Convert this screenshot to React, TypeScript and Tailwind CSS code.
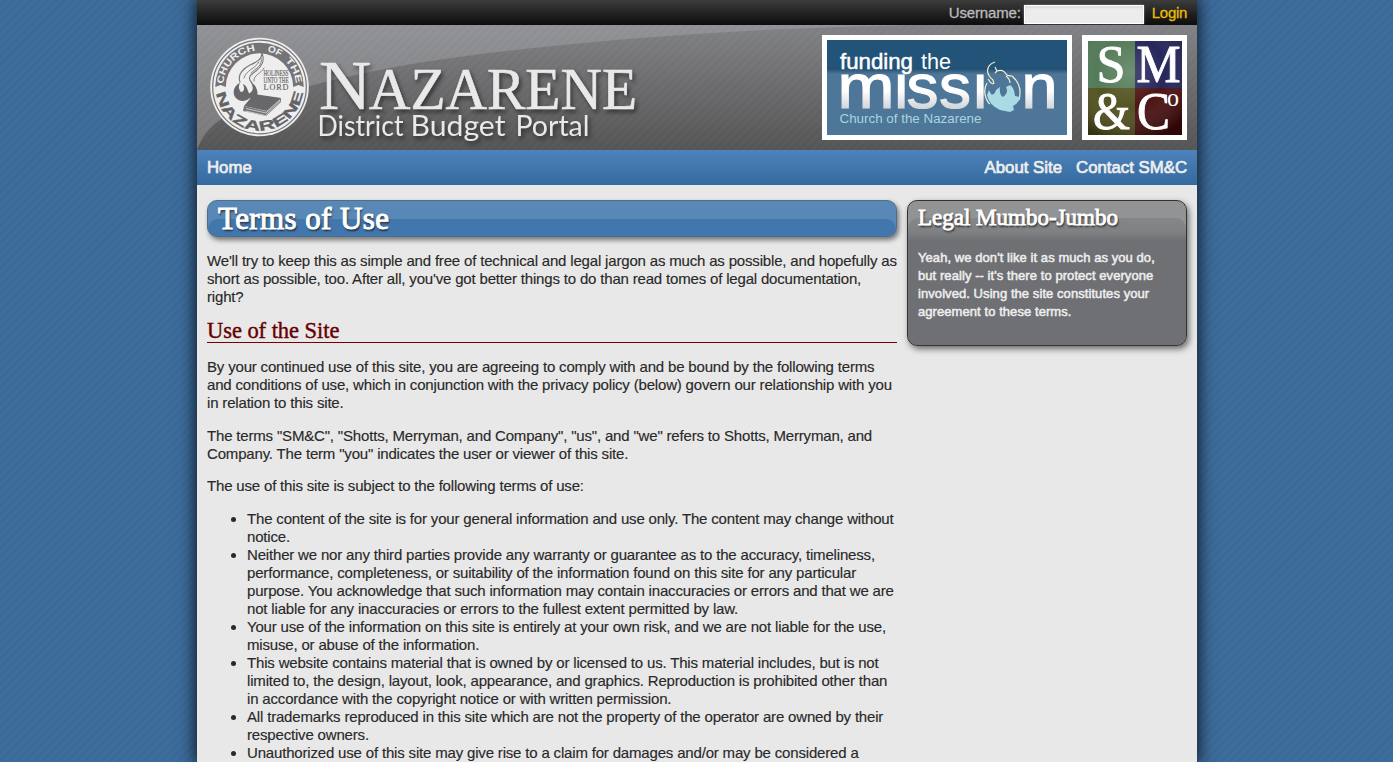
import React from "react";

const SANS = "font-['Liberation_Sans',Arial,sans-serif]";
const SERIF = "font-['Liberation_Serif',Georgia,serif]";

function Seal() {
  return (
    <g fontFamily="Liberation Sans, sans-serif" fontWeight="700">
      <defs>
        <path id="sealTop" d="M26 62 A36.5 36.5 0 0 1 99 62" />
        <path id="sealBottom" d="M19 62 A43.5 43.5 0 0 0 106 62" />
      </defs>
      <circle cx="62.5" cy="62" r="49.3" fill="#eee" />
      <circle cx="62.5" cy="62" r="46.8" fill="none" stroke="#747476" strokeWidth="1.2" />
      <path d="M18.200 62A44.300 44.300 0 0 1 106.800 62L101.500 60L96.200 62A33.700 33.700 0 0 0 28.800 62L23.500 60Z" fill="#747476" />
      <g fontSize="9.4" fill="#eee">
        <text>
          <textPath href="#sealTop" startOffset="3" textLength="50" lengthAdjust="spacingAndGlyphs">CHURCH</textPath>
        </text>
        <text>
          <textPath href="#sealTop" startOffset="65" textLength="14" lengthAdjust="spacingAndGlyphs">OF</textPath>
        </text>
        <text>
          <textPath href="#sealTop" startOffset="85" textLength="26" lengthAdjust="spacingAndGlyphs">THE</textPath>
        </text>
      </g>
      <text fontSize="13.5" fill="#626264" stroke="#626264" strokeWidth=".3">
        <textPath href="#sealBottom" startOffset="6" textLength="125" lengthAdjust="spacingAndGlyphs">NAZARENE</textPath>
      </text>
      <g fill="none" stroke="#77777a" strokeLinecap="round">
        <path d="M43 57c-3-8 4-14 10-17 7-3 12-6 12-12 3 8 0 13-6 18-6 4-9 7-4 12" strokeWidth="1.1" />
        <path d="M47 53c2-8 11-9 15-16M54 48c5-5 12-7 10-15M57 56c-1-6 7-7 10-13" strokeWidth=".9" />
      </g>
      <path d="M43 57.500C37 61 35 67 38 72c4 5 10 5 15 1 4 1 8-2 7.500-6-1-5-3-8-6.500-9.500 3 6 2 9-2 11-2-6-3-8-6-9.500 2 5 1 8-2 8-2-2-3-5-1-9.500z" fill="#68686a" />
      <path d="M57 69l27 4-14 13-23-5z" fill="#68686a" />
      <path d="M47 81l-1 5 23 5 15-14v-4L70 86.500z" fill="#727274" />
      <path d="M49 83.500l20 4.500 14-13M48.500 86l20 4.500L83.500 76" stroke="#e9e9e9" strokeWidth=".7" fill="none" />
      <g fill="#68686a" fontFamily="Liberation Serif, serif" fontSize="7.2" fontWeight="400" stroke="#68686a" strokeWidth=".2">
        <text x="66.500" y="50.8" textLength="25" lengthAdjust="spacingAndGlyphs">HOLINESS</text>
        <text x="66.500" y="57.8" textLength="25" lengthAdjust="spacingAndGlyphs">UNTO THE</text>
        <text x="66.500" y="65.2" fontSize="8.2" textLength="25" lengthAdjust="spacing">LORD</text>
      </g>
    </g>
  );
}

function PortalLogo() {
  return (
    <svg width="460" height="125" viewBox="0 0 460 125" className="block shrink-0">
      <Seal />
      <g fill="#e9e9e9" stroke="#e9e9e9" strokeWidth=".6" fontFamily="Liberation Serif, serif" className="drop-shadow-[2px_3px_2px_rgba(0,0,0,0.5)]">
        <text x="122" y="84" fontSize="69" textLength="52" lengthAdjust="spacingAndGlyphs">N</text>
        <text x="172" y="84" fontSize="58.5" textLength="268" lengthAdjust="spacingAndGlyphs">AZARENE</text>
      </g>
      <g fontSize="28.5" fontFamily="Lato, sans-serif" fill="#e9e9e9" className="drop-shadow-[2px_3px_2px_rgba(0,0,0,0.5)]">
        <text x="120.500" y="111" textLength="86" lengthAdjust="spacingAndGlyphs">District</text>
        <text x="213.500" y="111" textLength="95" lengthAdjust="spacingAndGlyphs">Budget</text>
        <text x="318.500" y="111" textLength="74" lengthAdjust="spacingAndGlyphs">Portal</text>
      </g>
    </svg>
  );
}

function MissionBadge() {
  return (
    <svg width="250" height="105" viewBox="0 0 250 105" className="block">
      <defs>
        <linearGradient id="missionText" gradientUnits="userSpaceOnUse" x1="0" y1="38" x2="0" y2="73">
          <stop offset="0.5" stopColor="#fff" />
          <stop offset="1" stopColor="#d3d6da" />
        </linearGradient>
        <linearGradient id="missionFade" x1="0" y1="0" x2="0" y2="1">
          <stop offset="0" stopColor="#1f4a6b" />
          <stop offset="1" stopColor="#4d7699" />
        </linearGradient>
      </defs>
      <rect width="250" height="105" fill="#fff" />
      <rect x="5" y="5" width="240" height="95" fill="#4d7699" />
      <rect x="5" y="5" width="240" height="30" fill="#225378" />
      <rect x="5" y="33" width="240" height="6" fill="url(#missionFade)" />
      <g fontFamily="Liberation Sans, sans-serif" fill="#fff">
        <text x="18" y="33.5" fontSize="22" stroke="#fff" strokeWidth=".5" textLength="73" lengthAdjust="spacingAndGlyphs">funding</text>
        <text x="99" y="33.5" fontSize="22" textLength="30" lengthAdjust="spacingAndGlyphs">the</text>
        <g fill="url(#missionText)" stroke="url(#missionText)" strokeWidth="1.2" fontSize="63">
          <text x="15.500" y="72.5" textLength="57" lengthAdjust="spacingAndGlyphs">m</text>
          <text x="70.500" y="72.5">ı</text>
          <text x="84.500" y="72.5" textLength="32" lengthAdjust="spacingAndGlyphs">s</text>
          <text x="117" y="72.5" textLength="32" lengthAdjust="spacingAndGlyphs">s</text>
          <text x="149.500" y="72.5">ı</text>
          <text x="199.500" y="72.5" textLength="36" lengthAdjust="spacingAndGlyphs">n</text>
        </g>
        <text x="17.500" y="87.5" fontSize="13.2" fill="#a8d5df" textLength="142" lengthAdjust="spacingAndGlyphs">Church of the Nazarene</text>
      </g>
      <path d="M173 27Q166 29 165.500 36Q166 41 171 45L172 49M166 44Q168 48 171 49M165 48Q161 55 164 63Q166 68 168 69M173 32L175 36Q181 34 184 39Q185 41 190 41Q198 48 198 57Q198 62 197 65M175 36L173 38M184 41Q188 44 188 48" fill="none" stroke="#f2f2cf" strokeWidth="1.2" />
      <path d="M167 55L165 60Q167 70 178 75L188 77L192 75L191 71Q197 68 198 62L193 61Q192 52 188 50L184 52Q187 58 181 62Q177 60 178 52L174 55Q172 61 169 59Z" fill="#a9dbe4" />
    </svg>
  );
}

function CompanyBadge() {
  return (
    <svg width="105" height="105" viewBox="0 0 105 105" className="block">
      <defs>
        <radialGradient id="companyGlow" gradientUnits="userSpaceOnUse" cx="48" cy="37" r="70">
          <stop offset="0" stopColor="#fff" stopOpacity=".2" />
          <stop offset=".5" stopColor="#fff" stopOpacity=".05" />
          <stop offset="1" stopColor="#000" stopOpacity=".3" />
        </radialGradient>
      </defs>
      <rect width="105" height="105" fill="#fff" />
      <rect x="6" y="6" width="47" height="47" fill="#4b7450" />
      <rect x="53" y="6" width="47" height="47" fill="#1c1c54" />
      <rect x="6" y="53" width="47" height="47" fill="#4c4b18" />
      <rect x="53" y="53" width="47" height="47" fill="#440909" />
      <rect x="6" y="6" width="94" height="94" fill="url(#companyGlow)" />
      <g fontFamily="Liberation Serif, serif" fill="#fff" stroke="#fff" strokeWidth=".9">
        <text x="14.500" y="46.5" fontSize="52" textLength="29" lengthAdjust="spacingAndGlyphs">S</text>
        <text x="54.500" y="46.5" fontSize="53" textLength="44" lengthAdjust="spacingAndGlyphs">M</text>
        <text x="11" y="94" fontSize="52" textLength="37" lengthAdjust="spacingAndGlyphs">&amp;</text>
        <text x="55" y="94" fontSize="52" textLength="33" lengthAdjust="spacingAndGlyphs">C</text>
        <text x="85" y="71" fontSize="25" strokeWidth="0" textLength="12" lengthAdjust="spacingAndGlyphs">o</text>
      </g>
    </svg>
  );
}

const stripes =
  "bg-[repeating-linear-gradient(135deg,rgba(255,255,255,0.018)_0px,rgba(255,255,255,0.018)_2px,rgba(0,0,0,0.012)_4px,rgba(255,255,255,0.018)_6px)]";

function Header() {
  return (
    <header className="relative h-[125px] shrink-0 bg-gradient-to-b from-[#818285] to-[#555455]">
      <svg width="1000" height="125" className="absolute inset-0">
        <defs>
          <linearGradient id="gloss" x1="0" y1="0" x2="0" y2="1">
            <stop offset="0" stopColor="#919296" />
            <stop offset="1" stopColor="#777779" />
          </linearGradient>
        </defs>
        <path d="M0 0H720Q590 2 463 11.500Q310 23 203 41Q100 60 40 85Q8 100 0 125Z" fill="url(#gloss)" />
      </svg>
      <div className={"absolute inset-0 " + stripes} />
      <div className="relative flex">
        <PortalLogo />
        <div className="ml-auto mr-[10px] flex gap-[10px] pt-[10px]">
          <MissionBadge />
          <CompanyBadge />
        </div>
      </div>
    </header>
  );
}

const terms: string[][] = [
  ["The content of the site is for your general information and use only. The content may change without", "notice."],
  [
    "Neither we nor any third parties provide any warranty or guarantee as to the accuracy, timeliness,",
    "performance, completeness, or suitability of the information found on this site for any particular",
    "purpose. You acknowledge that such information may contain inaccuracies or errors and that we are",
    "not liable for any inaccuracies or errors to the fullest extent permitted by law.",
  ],
  ["Your use of the information on this site is entirely at your own risk, and we are not liable for the use,", "misuse, or abuse of the information."],
  [
    "This website contains material that is owned by or licensed to us. This material includes, but is not",
    "limited to, the design, layout, look, appearance, and graphics. Reproduction is prohibited other than",
    "in accordance with the copyright notice or with written permission.",
  ],
  ["All trademarks reproduced in this site which are not the property of the operator are owned by their", "respective owners."],
  ["Unauthorized use of this site may give rise to a claim for damages and/or may be considered a"],
];

function Lines({ lines }: { lines: string[] }) {
  return (
    <>
      {lines.map((line) => (
        <span key={line} className="block whitespace-nowrap">{line}</span>
      ))}
    </>
  );
}

export default function App() {
  return (
    <div className={"h-[762px] overflow-hidden bg-[#3a6999] " + SANS}>
      <div className={"flex h-full justify-center pl-px " + stripes}>
        <div className="flex h-full w-[1000px] shrink-0 flex-col bg-[#e8e8e8] shadow-[0_0_15px_2px_rgba(0,0,0,0.75)]">
          <div className="flex h-[25px] shrink-0 items-center justify-end bg-gradient-to-b from-[#3d3d3d] to-[#0d0d0d] pr-[10px] text-[15px] tracking-[-0.15px] text-[#bbb]">
            <label htmlFor="username" className="mr-[3px] pt-[2px] [-webkit-text-stroke:0.3px_#bbb]">Username:</label>
            <input id="username" className="mt-[3px] h-[19px] w-[120px] border border-white bg-[#ececec] shadow-[inset_0_2px_2px_#ddd,0_0_2px_#888] outline-none" />
            <a className="ml-2 pt-[2px] tracking-[-0.3px] text-[#ebbc0b] [-webkit-text-stroke:0.3px_#ebbc0b]">Login</a>
          </div>
          <Header />
          <nav className="flex h-[35px] shrink-0 items-center gap-[14px] bg-gradient-to-b from-[#4d82bb] to-[#356a9f] px-[10px] text-[16.8px] text-[#eee] [-webkit-text-stroke:0.7px_#eee]">
            <a className="mr-auto">Home</a>
            <a>About Site</a>
            <a>Contact SM&amp;C</a>
          </nav>
          <main className="flex items-start gap-[10px] px-[10px] pt-[15px] text-[15px] leading-[18px] text-[#292929]">
            <article className="w-[690px] shrink-0 tracking-[-0.175px] [-webkit-text-stroke:0.15px_#292929]">
              <div className="flex h-[37px] flex-col overflow-hidden rounded-[10px] border border-[#4d6f8c] bg-[#5988b7] shadow-[2px_3px_5px_rgba(0,0,0,0.5)]">
                <div className="mt-[18px] h-[17px] shrink-0 rounded-t-[10px] bg-[#4277ae]" />
                <h1 className={"-mt-[35px] whitespace-nowrap pl-[10px] text-[31px] leading-[36px] tracking-[0.4px] text-white [-webkit-text-stroke:1px_white] [text-shadow:1px_2px_2px_#222] " + SERIF}>Terms of Use</h1>
              </div>
              <p className="mt-[15px]">
                <Lines lines={["We'll try to keep this as simple and free of technical and legal jargon as much as possible, and hopefully as", "short as possible, too. After all, you've got better things to do than read tomes of legal documentation,", "right?"]} />
              </p>
              <h2 className={"mt-[14px] h-[23px] whitespace-nowrap border-b border-[#700] text-[22.5px] leading-[22px] tracking-[-0.05px] text-[#600] [-webkit-text-stroke:0.4px_#600] " + SERIF}>Use of the Site</h2>
              <p className="mt-[15px]">
                <Lines lines={["By your continued use of this site, you are agreeing to comply with and be bound by the following terms", "and conditions of use, which in conjunction with the privacy policy (below) govern our relationship with you", "in relation to this site."]} />
              </p>
              <p className="mt-[15px]">
                <Lines lines={['The terms "SM&C", "Shotts, Merryman, and Company", "us", and "we" refers to Shotts, Merryman, and', 'Company. The term "you" indicates the user or viewer of this site.']} />
              </p>
              <p className="mt-[14px]">The use of this site is subject to the following terms of use:</p>
              <ul className="mt-[15px] list-disc pl-[40px]">
                {terms.map((lines) => (
                  <li key={lines[0]}><Lines lines={lines} /></li>
                ))}
              </ul>
            </article>
            <aside className="flex h-[146px] w-[280px] shrink-0 flex-col rounded-[10px] border border-[#333] bg-[linear-gradient(#929395_28px,#6f7074_28px)] shadow-[2px_3px_6px_rgba(0,0,0,0.55)]">
              <div className="mt-[17px] h-[127px] shrink-0 rounded-[10px] bg-[linear-gradient(#858687,#808184_14px,#6f7074_23px)]" />
              <div className="-mt-[144px] px-[10px]">
                <h3 className={"whitespace-nowrap text-[23px] leading-[33px] text-white [-webkit-text-stroke:0.8px_white] [text-shadow:1px_2px_2px_#222] " + SERIF}>Legal Mumbo-Jumbo</h3>
                <p className="mt-[15px] text-[13px] tracking-[0.07px] text-[#eee] [-webkit-text-stroke:0.5px_#eee]">
                  <Lines lines={["Yeah, we don't like it as much as you do,", "but really -- it's there to protect everyone", "involved. Using the site constitutes your", "agreement to these terms."]} />
                </p>
              </div>
            </aside>
          </main>
        </div>
      </div>
    </div>
  );
}
